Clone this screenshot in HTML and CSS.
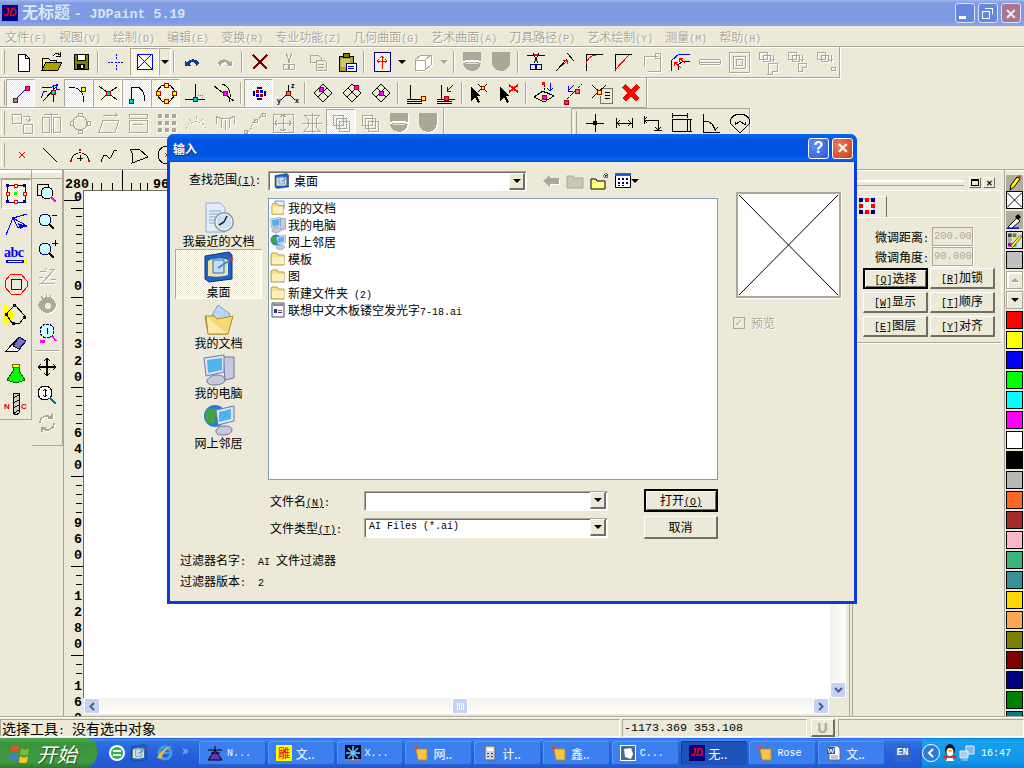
FILE: index.html
```html
<!DOCTYPE html>
<html lang="zh-CN">
<head>
    <meta charset="UTF-8">
    <link rel="stylesheet" href="styles.css">
    <title>JDPaint 5.19</title>
</head>
<body>

<!-- shared pictures, used big in the places bar and small in the list -->
<svg class="defs" width="0" height="0">
    <symbol id="desk" viewBox="0 0 32 32">
        <path d="M2 5l24-4 3 3v24L6 31l-4-3z" fill="#1d62c4" stroke="#0c3577"/>
        <path d="M5 10c6-3 14-3 20-1v15c-6 2-14 2-20 1z" fill="#f3e3a2"/>
        <path d="M10 9h11v13H10z" fill="#bfe0f7" stroke="#2a6cc0"/>
        <path d="M15 17l12-8" stroke="#4a86d0" stroke-width="2"/>
        <circle cx="28" cy="8" r="2" fill="#c8322a"/>
    </symbol>
    <symbol id="docs" viewBox="0 0 32 32">
        <path d="M15 1l12 9-6 10-12-9z" fill="#bcd6f5" stroke="#7e9ccc"/>
        <path d="M2 12h9l3 3 16-3-5 18H5z" fill="#f6d977" stroke="#b08d2c"/>
        <path d="M3 12l2 18 19 0" fill="#fbeaa8" stroke="#b08d2c"/>
    </symbol>
    <symbol id="comp" viewBox="0 0 32 32">
        <path d="M20 3h11v21l-9 2z" fill="#c6c9dc" stroke="#73769b"/>
        <path d="M1 4l20-3v17L3 22z" fill="#dfe4f2" stroke="#6e7aa5"/>
        <path d="M4 6l15-2v12L5 19z" fill="#4fb3ec"/>
        <path d="M4 27c0-3 5-6 10-6s8 2 8 5-5 5-10 5-8-1-8-4z" fill="#c6c9dc" stroke="#73769b"/>
    </symbol>
    <symbol id="net" viewBox="0 0 32 32">
        <circle cx="12" cy="12" r="11" fill="#2c7bd6"/>
        <path d="M5 5c4-2 8 0 9 3s-3 5-2 8-3 5-7 3c-4-4-4-10 0-14z" fill="#3fa441"/>
        <path d="M13 6l18-4v15l-16 4z" fill="#dfe4f2" stroke="#6e7aa5"/>
        <path d="M16 8l12-3v10l-12 3z" fill="#4fb3ec"/>
        <path d="M13 27c0-3 5-5 9-5s7 1 7 4-4 5-9 5-7-1-7-4z" fill="#c6c9dc" stroke="#73769b"/>
    </symbol>
    <symbol id="recent" viewBox="0 0 32 32">
        <path d="M3 1h14l5 5v24H3z" fill="#e4ecfa" stroke="#93a9d8"/>
        <path d="M6 9h12M6 12h10M6 15h8M6 18h8M6 21h8" stroke="#8aa5d8"/>
        <circle cx="21" cy="20" r="10" fill="#8f95a5"/>
        <circle cx="21" cy="20" r="8" fill="#c7e2f2" stroke="#fff"/>
        <path d="M21 20l-5 3M21 20l3-6" stroke="#222" stroke-width="1.5"/>
    </symbol>
    <symbol id="folder" viewBox="0 0 16 16">
        <path d="M1 4l1-2h5l1 2h6v10H1z" fill="#fbe08e" stroke="#b99a3c"/>
        <path d="M2 6h12v7H2z" fill="#fdf0bd"/>
    </symbol>
    <symbol id="shield" viewBox="0 0 24 24">
        <path d="M3 2h18v10c0 5-4 9-9 9s-9-4-9-9z" fill="#aca899"/>
    </symbol>
    <symbol id="shield-band" viewBox="0 0 24 24">
        <path d="M3 2h18v10c0 5-4 9-9 9s-9-4-9-9z" fill="#aca899"/>
        <path d="M3 11c4-2 14-2 18 0v2c-4-2-14-2-18 0z" fill="#fff"/>
        <path d="M6 14c3-1 9-1 12 0" stroke="#ece9d8"/>
    </symbol>
</svg>

<div class="desktop">

    <div class="titlebar">
        <span class="app-logo">JD</span>
        <span class="title-text">无标题 <span class="title-lat">- JDPaint 5.19</span></span>
        <div class="win-btns">
            <span class="win-btn"><i class="glyph-min"></i></span>
            <span class="win-btn"><svg width="12" height="12" viewBox="0 0 12 12"><path d="M3.500 1.500h7v6M.500 4.500h7v7h-7z" fill="none" stroke="#fff"/><path d="M3 1h8v1H3zM0 4h8v1H0z" fill="#fff"/></svg></span>
            <span class="win-btn win-close">✕</span>
        </div>
    </div>

    <div class="menubar">
        <span>文件<u class="m">(F)</u></span>
        <span>视图<u class="m">(V)</u></span>
        <span>绘制<u class="m">(D)</u></span>
        <span>编辑<u class="m">(E)</u></span>
        <span>变换<u class="m">(R)</u></span>
        <span>专业功能<u class="m">(Z)</u></span>
        <span>几何曲面<u class="m">(G)</u></span>
        <span>艺术曲面<u class="m">(A)</u></span>
        <span>刀具路径<u class="m">(P)</u></span>
        <span>艺术绘制<u class="m">(Y)</u></span>
        <span>测量<u class="m">(M)</u></span>
        <span>帮助<u class="m">(H)</u></span>
    </div>

    <!-- toolbar row 1 -->
    <div class="tbrow r1">
        <div class="toolbar tb1">
            <i class="grip"></i>
            <span class="tbtn"><svg class="i" viewBox="0 0 24 24"><path d="M7 4h7l4 4v13H7z" fill="#fff" stroke="#000"/><path d="M14 4v4h4" stroke="#000"/></svg></span>
            <span class="tbtn"><svg class="i" viewBox="0 0 24 24"><path d="M2 20V8h6l2 2h6v3" fill="#ffe98a" stroke="#000"/><path d="M2 20l4-8h16l-4 8z" fill="#a9a200" stroke="#000"/><path d="M13 6c2-3 5-3 7-1" stroke="#000"/><path d="M20 2v4h-4" stroke="#000"/></svg></span>
            <span class="tbtn"><svg class="i" viewBox="0 0 24 24"><path d="M5 4h14v15H5z" fill="#808000" stroke="#000"/><path d="M8 4h8v6H8z" fill="#fff" stroke="#000"/><path d="M8 14h8v5H8z" fill="#000"/><path d="M12 15h2v3h-2z" fill="#fff"/></svg></span>
            <i class="sep"></i>
            <span class="tbtn"><svg class="i" viewBox="0 0 24 24"><path d="M4 12h6M14 12h6M12 4v5M12 15v5" stroke="#00f" stroke-dasharray="2 1"/><path d="M11 12h2" stroke="#00f"/></svg></span>
            <span class="tbtn on"><svg class="i" viewBox="0 0 24 24"><path d="M4 4h15v15H4z" fill="#fff" stroke="#00f" stroke-width="1"/><path d="M4 4l15 15M19 4L4 19" stroke="#00f"/></svg></span>
            <span class="tbtn drop on-line"><i class="caret"></i></span>
            <i class="sep"></i>
            <span class="tbtn w31"><svg class="i" viewBox="0 0 24 24"><path d="M6 13c2-5 10-5 12 0-1 2-2 3-3 3 1-4-5-5-7-2l2 2H4v-6z" fill="#0a3a9b"/></svg></span>
            <span class="tbtn w31 off"><svg class="i" viewBox="0 0 24 24"><path d="M18 13c-2-5-10-5-12 0 1 2 2 3 3 3-1-4 5-5 7-2l-2 2h6v-6z" fill="#aca899"/></svg></span>
            <i class="sep"></i>
            <span class="tbtn"><svg class="i" viewBox="0 0 24 24"><path d="M5 5l14 14M19 5L5 19" stroke="#7f0000" stroke-width="2.500"/></svg></span>
            <span class="tbtn off"><svg class="i" viewBox="0 0 24 24"><path d="M9 3l4 10M15 3l-4 10" stroke="#aca899"/><circle cx="9" cy="17" r="3" stroke="#aca899"/><circle cx="15" cy="17" r="3" stroke="#aca899"/></svg></span>
            <span class="tbtn off"><svg class="i" viewBox="0 0 24 24"><path d="M4 5h8l3 3v4H4z" fill="#ece9d8" stroke="#aca899"/><path d="M10 10h8l2 2v8H10z" fill="#ece9d8" stroke="#aca899"/><path d="M12 14h6M12 17h6" stroke="#aca899"/></svg></span>
            <span class="tbtn"><svg class="i" viewBox="0 0 24 24"><path d="M4 6h14v15H4z" fill="#b0a040" stroke="#000"/><path d="M8 3h6v4H8z" fill="#808000" stroke="#000"/><path d="M6 9h9v8H6z" fill="#cfc86a"/><path d="M11 13h10v8H11z" fill="#fff" stroke="#00007f"/><path d="M13 16h6M13 18h6" stroke="#00f"/></svg></span>
            <i class="sep"></i>
            <span class="tbtn"><svg class="i" viewBox="0 0 24 24"><path d="M4 2h16v19H4z" stroke="#00007f" fill="#f4f2e8"/><path d="M12 6v10M7 11h10" stroke="#f00"/><path d="M10 8l2-2 2 2M9 9l-2 2 2 2M15 9l2 2-2 2M12 16v3" stroke="#f00"/></svg></span>
            <span class="tbtn drop"><i class="caret"></i></span>
            <span class="tbtn off"><svg class="i" viewBox="0 0 24 24"><path d="M4 10l6-5h10v10l-6 5H4z" fill="#fff" stroke="#aca899"/><path d="M4 10h10v10M14 10l6-5" stroke="#aca899"/></svg></span>
            <span class="tbtn drop w14 off"><i class="caret"></i></span>
            <i class="sep"></i>
            <span class="tbtn"><svg class="i" viewBox="0 0 24 24"><use href="#shield-band"/></svg></span>
            <span class="tbtn"><svg class="i" viewBox="0 0 24 24"><use href="#shield"/></svg></span>
            <i class="sep"></i>
            <span class="tbtn"><svg class="i" viewBox="0 0 24 24"><path d="M3 5h18" stroke="#00007f"/><path d="M9 3l5 10M15 3l-5 10" stroke="#000"/><circle cx="9" cy="17" r="3" stroke="#00007f"/><circle cx="15" cy="17" r="3" stroke="#00007f"/><path d="M10 5h4" stroke="#f00" stroke-width="2"/></svg></span>
            <span class="tbtn"><svg class="i" viewBox="0 0 24 24"><path d="M3 21L14 9M14 3l7 8" stroke="#000"/><path d="M9 16l5-5" stroke="#f00"/><path d="M10 10h4v4" stroke="#f00"/></svg></span>
            <span class="tbtn"><svg class="i" viewBox="0 0 24 24"><path d="M4 21V4h17" stroke="#000"/><path d="M4 14c1-5 5-9 10-9" stroke="#f00"/></svg></span>
            <span class="tbtn"><svg class="i" viewBox="0 0 24 24"><path d="M4 21V4h17" stroke="#000"/><path d="M4 20L18 5" stroke="#f00"/></svg></span>
            <span class="tbtn off"><svg class="i" viewBox="0 0 24 24"><path d="M4 6h14M20 9v12H8M4 6v11" stroke="#aca899"/><path d="M15 3h5v5h-5z" stroke="#aca899"/></svg></span>
            <span class="tbtn"><svg class="i" viewBox="0 0 24 24"><path d="M2 21V11l8-7h11" stroke="#00f"/><path d="M9 20V15l5-4h7" stroke="#000"/><path d="M5 12l7 6M5 12h4M5 12v4M10 8l6 5M10 8h4M10 8v4" stroke="#f00"/></svg></span>
            <span class="tbtn off"><svg class="i" viewBox="0 0 24 24"><path d="M1 12c0-3 4-3 11-3s11 0 11 3-4 3-11 3-11 0-11-3z" stroke="#aca899"/><path d="M2 12h20" stroke="#aca899"/></svg></span>
            <span class="tbtn off"><svg class="i" viewBox="0 0 24 24"><path d="M2 2h20v20H2zM6 6h12v12H6zM9 9h6v6H9z" stroke="#aca899"/></svg></span>
            <span class="tbtn off"><svg class="i" viewBox="0 0 24 24"><path d="M3 2h8v7H3zM7 5h7v6H7zM17 5v6l-2-2M17 11l2-2M13 13h8v8h-5v3h-4z" stroke="#aca899"/></svg></span>
            <span class="tbtn off"><svg class="i" viewBox="0 0 24 24"><path d="M3 2h8v7H3zM7 5h7v6H7zM17 5v6l-2-2M17 11l2-2M13 13h8v4h-4v4h-4z" stroke="#aca899"/></svg></span>
            <span class="tbtn off"><svg class="i" viewBox="0 0 24 24"><path d="M3 2h8v7H3zM7 5h7v6H7zM17 5v6l-2-2M17 11l2-2M17 17h4v3h-4z" stroke="#aca899"/></svg></span>
        </div>
    </div>

    <!-- toolbar row 2 -->
    <div class="tbrow">
        <div class="toolbar tb2">
            <i class="grip g2"></i>
            <span class="tbtn on"><svg class="i" viewBox="0 0 24 24"><path d="M6 19L18 7" stroke="#00007f"/><path d="M4 17h4v4H4z" fill="#0cc" stroke="#a00"/><path d="M16 5h4v4h-4z" fill="#f0f" stroke="#a00"/></svg></span>
            <span class="tbtn"><svg class="i" viewBox="0 0 24 24"><path d="M4 6h10M15 4v17M5 20L20 4" stroke="#000"/><path d="M3 17l3-7h3M14 6l6-3M18 8h4M18 8V4" stroke="#00f"/><path d="M13 9h4v4h-4z" fill="#0cc" stroke="#a00"/></svg></span>
            <span class="tbtn on"><svg class="i" viewBox="0 0 24 24"><path d="M2 6c8 0 15 4 15 15" stroke="#000"/><path d="M14 6h4v4h-4z" fill="#ff0" stroke="#a00"/></svg></span>
            <span class="tbtn on"><svg class="i" viewBox="0 0 24 24"><path d="M3 5l9 7-7 7M21 6l-9 6 9 7" stroke="#000"/><path d="M10 10h4v4h-4z" fill="#0cc" stroke="#a00"/></svg></span>
            <span class="tbtn on"><svg class="i" viewBox="0 0 24 24"><path d="M6 20V6h6c5 1 8 7 8 14" stroke="#000" stroke-dasharray="8 0"/><path d="M4 18h4v4H4z" fill="#0cc" stroke="#a00"/></svg></span>
            <span class="tbtn on"><svg class="i" viewBox="0 0 24 24"><path d="M8 4h8l5 6v4l-5 6H8l-5-6v-4z" stroke="#000"/><path d="M10 2h4v4h-4zM10 18h4v4h-4zM2 10h4v4H2zM18 10h4v4h-4z" fill="#ff0" stroke="#a00"/></svg></span>
            <span class="tbtn"><svg class="i" viewBox="0 0 24 24"><path d="M12 3v15M2 18h20" stroke="#000"/><path d="M15 14h4M19 14v3" stroke="#777" stroke-dasharray="1 1"/><path d="M10 16h4v4h-4z" fill="#0cc" stroke="#a00"/></svg></span>
            <span class="tbtn"><svg class="i" viewBox="0 0 24 24"><path d="M2 5l20 15M10 3c7 2 10 9 7 18" stroke="#000"/><path d="M11 10h4v4h-4z" fill="#f0f" stroke="#a00"/></svg></span>
            <i class="sep"></i>
            <span class="tbtn on"><svg class="i" viewBox="0 0 24 24"><path d="M8 8h9v9H8z" fill="#fff"/><path d="M10 7h5M10 18h5M7 10v5M18 10v5" stroke="#00007f" stroke-width="2"/><path d="M9 9h3v3H9z" fill="#a00"/><path d="M13 13h3v3h-3z" fill="#a00"/><path d="M13 9h3v3h-3zM9 13h3v3H9z" fill="#00f"/></svg></span>
            <span class="tbtn"><svg class="i" viewBox="0 0 24 24"><path d="M12 12V4M12 12l-7 7M12 12l7 7" stroke="#000"/><text class="axis" x="15" y="7">z</text><text class="axis" x="1" y="22">y</text><text class="axis" x="19" y="22">x</text><path d="M10 10h4v4h-4z" fill="#f66" stroke="#800"/></svg></span>
            <i class="sep"></i>
            <span class="tbtn"><svg class="i" viewBox="0 0 24 24"><path d="M12 3l9 9-9 9-9-9zM8 7l9 9M16 7l-9 9" stroke="#000"/><path d="M8 6h4v4H8z" fill="#f0f" stroke="#a00"/></svg></span>
            <span class="tbtn"><svg class="i" viewBox="0 0 24 24"><path d="M12 3l9 9-9 9-9-9zM8 7l9 9M16 7l-9 9" stroke="#000"/><path d="M14 4h4v4h-4z" fill="#f0f" stroke="#a00"/></svg></span>
            <span class="tbtn"><svg class="i" viewBox="0 0 24 24"><path d="M12 3l9 9-9 9-9-9zM8 7l9 9M16 7l-9 9" stroke="#000"/><path d="M10 10h4v4h-4z" fill="#f0f" stroke="#a00"/></svg></span>
            <i class="sep"></i>
            <span class="tbtn"><svg class="i" viewBox="0 0 24 24"><path d="M6 4v14h14M3 18h17M3 20h15M3 22h15" stroke="#000"/><path d="M17 15h4v4h-4z" fill="#ff0" stroke="#a00"/></svg></span>
            <span class="tbtn"><svg class="i" viewBox="0 0 24 24"><path d="M8 4v14h14M4 18h17M4 20h15M4 22h15" stroke="#000"/><path d="M14 10l6-6M14 6v4h4" stroke="#00f"/><path d="M11 15h4v4h-4z" fill="#f0f" stroke="#a00"/></svg></span>
            <i class="sep"></i>
            <span class="tbtn"><svg class="i" viewBox="0 0 24 24"><path d="M3 6l10 9-4 0 3 6-2 1-3-6-4 4z" fill="#000"/><path d="M10 3l9 8M19 3l-9 8" stroke="#000"/><path d="M13 5h3v3h-3z" fill="#ff0" stroke="#a00"/></svg></span>
            <span class="tbtn"><svg class="i" viewBox="0 0 24 24"><path d="M3 6l10 9-4 0 3 6-2 1-3-6-4 4z" fill="#000"/><path d="M12 4l9 7M21 4l-9 7" stroke="#f00" stroke-width="2"/></svg></span>
            <i class="sep"></i>
            <span class="tbtn"><svg class="i" viewBox="0 0 24 24"><path d="M2 16l9-6 11 5-10 6z" stroke="#000"/><path d="M12 4v8" stroke="#000" stroke-dasharray="2 1"/><path d="M18 2v8M15 7l3 3 3-3" stroke="#00f"/><path d="M10 1h3v3h-3z" fill="#f00"/><path d="M10 14h4v4h-4z" fill="#f0f" stroke="#a00"/></svg></span>
            <span class="tbtn"><svg class="i" viewBox="0 0 24 24"><path d="M3 21L21 3" stroke="#000" stroke-dasharray="3 1"/><path d="M13 4l-6 6M7 5v5h5" stroke="#00f"/><path d="M3 19h4v4H3z" fill="#f0f" stroke="#a00"/><path d="M14 8h4v4h-4z" fill="#f66" stroke="#a00"/></svg></span>
            <span class="tbtn"><svg class="i" viewBox="0 0 24 24"><path d="M2 4l14 13M16 4L2 17" stroke="#000"/><path d="M13 7h9v15H10v-7" fill="#ece9d8" stroke="#777"/><path d="M15 11h5M15 14h5M15 17h5" stroke="#000"/><path d="M7 9h4v4H7z" fill="#ff0" stroke="#a00"/></svg></span>
            <span class="tbtn"><svg class="i" viewBox="0 0 24 24"><path d="M5 5l14 14M19 5L5 19" stroke="#f00" stroke-width="5"/></svg></span>
        </div>
    </div>

    <!-- toolbar row 3 -->
    <div class="tbrow">
        <div class="toolbar tb3">
            <i class="grip g3"></i>
            <span class="tbtn off"><svg class="i" viewBox="0 0 24 24"><path d="M2 3h9v9H2zM13 13h9v9h-9zM13 5h6v5M16 8l3 3 2-3" stroke="#aca899"/></svg></span>
            <span class="tbtn off"><svg class="i" viewBox="0 0 24 24"><path d="M3 6h7v15H3zM14 6h7v15h-7zM12 2v21M5 3h14" stroke="#aca899"/></svg></span>
            <span class="tbtn off"><svg class="i" viewBox="0 0 24 24"><circle cx="12" cy="12" r="7" stroke="#aca899"/><path d="M10 2h4v3h-4zM10 19h4v3h-4zM2 10h3v4H2zM19 10h3v4h-3z" stroke="#aca899"/></svg></span>
            <span class="tbtn off"><svg class="i" viewBox="0 0 24 24"><path d="M6 9h16l-4 12H2zM6 4h14l-2-2M20 4l-2 2" stroke="#aca899"/></svg></span>
            <span class="tbtn off"><svg class="i" viewBox="0 0 24 24"><path d="M3 3h18v4H3zM3 9h18v12H3zM7 13h10" stroke="#aca899"/></svg></span>
            <span class="tbtn off"><svg class="i" viewBox="0 0 24 24"><path d="M3 3h4v4H3zM10 3h4v4h-4zM17 3h4v4h-4zM3 10h4v4H3zM10 10h4v4h-4zM17 10h4v4h-4zM3 17h4v4H3zM10 17h4v4h-4zM17 17h4v4h-4z" fill="#aca899"/></svg></span>
            <span class="tbtn off"><svg class="i" viewBox="0 0 24 24"><path d="M2 18C5 8 19 8 22 18" stroke="#aca899" stroke-dasharray="2 2"/><path d="M5 8l2 2M12 5v3M19 8l-2 2" stroke="#aca899"/></svg></span>
            <span class="tbtn off"><svg class="i" viewBox="0 0 24 24"><path d="M3 5c5 4 13 4 18 0M3 5v8M8 8v9M12 9v10M16 8v9M21 5v8" stroke="#aca899"/></svg></span>
            <span class="tbtn off"><svg class="i" viewBox="0 0 24 24"><path d="M4 21c8 0 4-11 10-12s3-5 7-6" stroke="#aca899" stroke-dasharray="3 1"/><path d="M2 19h3v3H2zM12 8h3v3h-3zM20 2h3v3h-3z" stroke="#aca899"/></svg></span>
            <span class="tbtn off"><svg class="i" viewBox="0 0 24 24"><path d="M2 3h20v18H2zM12 4v16M3 12h18M9 6l3-2 3 2M9 18l3 2 3-2M6 9l-2 3 2 3M18 9l2 3-2 3" stroke="#aca899"/></svg></span>
            <span class="tbtn off"><svg class="i" viewBox="0 0 24 24"><path d="M4 4h16l-4 4v8l4 4H4l4-4V8zM2 12h20M12 2v20" stroke="#aca899"/></svg></span>
            <span class="tbtn on off"><svg class="i" viewBox="0 0 24 24"><path d="M4 4h10v10H4zM10 10h10v10H10zM7 7h10v10H7z" stroke="#aca899"/></svg></span>
            <span class="tbtn off"><svg class="i" viewBox="0 0 24 24"><path d="M4 4h10v10H4zM10 10h10v10H10zM7 7h10v10H7z" stroke="#aca899"/></svg></span>
            <span class="tbtn off"><svg class="i" viewBox="0 0 24 24"><use href="#shield-band"/></svg></span>
            <span class="tbtn off"><svg class="i" viewBox="0 0 24 24"><use href="#shield"/></svg></span>
        </div>
        <div class="toolbar tb3b">
            <i class="grip"></i>
            <span class="tbtn"><svg class="i" viewBox="0 0 24 24"><path d="M12 3v18M3 12h18" stroke="#000"/><path d="M10 10h4v4h-4z" fill="#000"/></svg></span>
            <span class="tbtn"><svg class="i" viewBox="0 0 24 24"><path d="M4 7v10M20 7v10M4 12h16M5 12l3-3M5 12l3 3M19 12l-3-3M19 12l-3 3" stroke="#000"/></svg></span>
            <span class="tbtn"><svg class="i" viewBox="0 0 24 24"><path d="M3 5v8M3 9h14v10M3 9l3-3M3 9l3 3M13 19h8M17 19l-3-3M17 19l3-3" stroke="#000"/></svg></span>
            <span class="tbtn"><svg class="i" viewBox="0 0 24 24"><path d="M2 8h15v12H2zM2 2v5M17 2v5M2 4h15M20 8v12M22 8h-4M22 20h-4" stroke="#000"/></svg></span>
            <span class="tbtn"><svg class="i" viewBox="0 0 24 24"><path d="M4 3v18h17" stroke="#000"/><path d="M5 10c6 0 10 4 12 10M14 14l2 5 3-3" stroke="#000"/></svg></span>
            <span class="tbtn"><svg class="i" viewBox="0 0 24 24"><path d="M2 12c0-6 5-9 10-9s10 3 10 9l-10 10z" stroke="#000"/><path d="M7 14l5-4 5 4M7 14v-3M17 14v-3" stroke="#000"/></svg></span>
        </div>
    </div>

    <!-- toolbar row 4 -->
    <div class="tbrow r4">
        <div class="toolbar tb4">
            <i class="grip g3"></i>
            <span class="tbtn"><svg class="i" viewBox="0 0 24 24"><path d="M9 9l6 6M15 9l-6 6" stroke="#f00"/></svg></span>
            <span class="tbtn"><svg class="i" viewBox="0 0 24 24"><path d="M4 5l14 14" stroke="#000"/></svg></span>
            <span class="tbtn"><svg class="i" viewBox="0 0 24 24"><path d="M3 18C5 7 19 7 21 18M12 12v6M9 15h6" stroke="#000"/><path d="M11 6l2 2M13 6l-2 2M2 17l2 2M4 17l-2 2M20 17l2 2M22 17l-2 2" stroke="#c00"/></svg></span>
            <span class="tbtn"><svg class="i" viewBox="0 0 24 24"><path d="M4 19c2-7 4-8 6-6s3 4 5-1 3-5 5-5" stroke="#000"/></svg></span>
            <span class="tbtn"><svg class="i" viewBox="0 0 24 24"><path d="M4 6h9l9 8-16 6 1-8z" stroke="#000"/></svg></span>
            <span class="tbtn"><svg class="i" viewBox="0 0 24 24"><circle cx="12" cy="12" r="9" stroke="#000"/><path d="M10 10l4 4M14 10l-4 4" stroke="#f00"/></svg></span>
        </div>
    </div>

    <div class="workarea">
        <!-- left tool column -->
        <div class="toolcol">
            <i class="hgrip"></i>
            <span class="cbtn on"><svg class="i" viewBox="0 0 24 24"><path d="M3 3h18v17H3z" stroke="#00007f"/><path d="M2 2h3v3H2zM19 2h3v3h-3zM2 18h3v3H2zM19 18h3v3h-3z" fill="#00007f"/><path d="M10 2h3v3h-3zM10 18h3v3h-3zM2 10h3v3H2zM19 10h3v3h-3z" fill="#fff" stroke="#f00"/><path d="M10 10h3v3h-3z" fill="#0f0"/></svg></span>
            <span class="cbtn"><svg class="i" viewBox="0 0 24 24"><path d="M2 23L9 6l14-4M9 6l14 8-9 2z" stroke="#00f"/><path d="M8 5h3v3H8z" fill="#00f"/><path d="M14 11l8 3-6 3z" fill="#00f"/></svg></span>
            <span class="cbtn"><svg class="i abc" viewBox="0 0 24 24"><text class="abc-text" x="0" y="15">abc</text><path d="M2 18h20v3H2z" fill="#00f"/><path d="M4 19h14" stroke="#fff"/><path d="M20 18h3v3h-3z" fill="#ff0"/></svg></span>
            <span class="cbtn"><svg class="i" viewBox="0 0 24 24"><path d="M7 2h10l6 7v6l-6 7H7l-6-7V9z" stroke="#f00"/><path d="M7 7h10v10H7z" stroke="#00f"/></svg></span>
            <span class="cbtn"><svg class="i" viewBox="0 0 24 24"><path d="M0 2l11 11-5 8H0z" fill="#ff0" stroke="none"/><path d="M2 12l9-9 10 11-5 7H8z" stroke="#000"/><path d="M9 2h3v3H9zM1 11h3v3H1zM19 14h3v3h-3zM8 20h3v3H8z" fill="#000"/></svg></span>
            <span class="cbtn"><svg class="i" viewBox="0 0 24 24"><path d="M2 19l13-14 7 4-8 10z" fill="#fff" stroke="#000"/><path d="M9 14l6-9 7 4-7 8z" fill="#77a" stroke="#00007f"/></svg></span>
            <span class="cbtn"><svg class="i" viewBox="0 0 24 24"><path d="M9 3h6v6l6 9-9 3-9-3 6-9z" fill="#0f0" stroke="#060"/><ellipse cx="12" cy="4" rx="4" ry="2" fill="#ff0" stroke="#660"/></svg></span>
            <span class="cbtn"><svg class="i" viewBox="0 0 24 24"><path d="M9 1h6v20l-3 2-3-2z" fill="#ccc" stroke="#000"/><path d="M9 6l6-3M9 11l6-3M9 16l6-3M10 21l5-3" stroke="#000"/><text class="nc" x="0" y="17" fill="#c00">N</text><text class="nc" x="17" y="17" fill="#c00">C</text></svg></span>
        </div>

        <div class="toolcol tc2">
            <i class="hgrip"></i>
            <span class="zbtn"><svg class="i" viewBox="0 0 24 24"><path d="M2 3h11v11H2z" stroke="#000"/><circle cx="12" cy="12" r="6" fill="#cff" stroke="#000"/><path d="M16 16l5 5" stroke="#f0f" stroke-width="2"/></svg></span>
            <span class="zbtn"><svg class="i" viewBox="0 0 24 24"><circle cx="10" cy="11" r="6" fill="#cff" stroke="#006"/><path d="M14 15l5 5" stroke="#000" stroke-width="2"/><path d="M17 6h5" stroke="#000"/></svg></span>
            <span class="zbtn"><svg class="i" viewBox="0 0 24 24"><circle cx="10" cy="12" r="6" fill="#cff" stroke="#006"/><path d="M14 16l5 5" stroke="#000" stroke-width="2"/><path d="M17 6h6M20 3v6" stroke="#000"/></svg></span>
            <span class="zbtn off"><svg class="i" viewBox="0 0 24 24"><path d="M5 6h6M15 4h5l-13 14h13M4 12h4M16 14h5M6 18l-2 2M12 3l-2 2" stroke="#aca899"/></svg></span>
            <span class="zbtn off"><svg class="i" viewBox="0 0 24 24"><path d="M3 12c2-6 6-8 10-8s8 4 8 8-4 8-9 8-7-4-9-8z" fill="#aca899"/><path d="M6 3l2 3M11 1v3M16 2l-1 3" stroke="#aca899"/><circle cx="13" cy="13" r="3" fill="#ece9d8"/></svg></span>
            <span class="zbtn"><svg class="i" viewBox="0 0 24 24"><circle cx="12" cy="10" r="7" fill="#cff" stroke="#006" stroke-dasharray="3 1"/><path d="M12 7v6" stroke="#000"/><path d="M17 15l4 5" stroke="#f0f" stroke-width="2"/><path d="M5 19h5v3H5z" fill="#f0f"/></svg></span>
            <i class="hline"></i>
            <span class="zbtn"><svg class="i" viewBox="0 0 24 24"><path d="M12 3v18M3 12h18M9 6l3-3 3 3M9 18l3 3 3-3M6 9l-3 3 3 3M18 9l3 3-3 3" stroke="#000" stroke-width="1.400"/></svg></span>
            <span class="zbtn"><svg class="i" viewBox="0 0 24 24"><circle cx="10" cy="10" r="7" fill="#fff" stroke="#000"/><path d="M10 6v8M8 8l2-2 2 2M8 12l2 2 2-2" stroke="#000"/><path d="M15 15l6 6" stroke="#07a" stroke-width="2"/></svg></span>
            <span class="zbtn off"><svg class="i" viewBox="0 0 24 24"><path d="M5 12a7 7 0 0 1 12-5M19 12a7 7 0 0 1-12 5M17 3v4h-4M7 21v-4h4" stroke="#aca899" stroke-width="1.500"/></svg></span>
        </div>

        <!-- ruler and drawing area -->
        <div class="canvas-wrap">
            <svg class="hruler" width="782" height="20">
                <text class="rtxt" x="1" y="18">280</text>
                <path d="M28.500 13v7M37.500 13v7M48.500 13v7M58.500 0v20M67.500 13v7M76.500 13v7M83.500 13v7" stroke="#000"/>
                <text class="rtxt" x="89" y="18">96</text>
            </svg>
            <div class="canvas-mid">
                <svg class="vruler" width="19" height="526">
                    <path d="M0 10.500h15" stroke="#000"/>
                    <path d="M7 18.500h12M12 26.500h6M12 35.500h6M12 44.500h6M12 53.500h6M12 62.500h6M12 71.500h6M12 80.500h6M7 107.500h12M12 115.500h6M12 124.500h6M12 133.500h6M12 142.500h6M7 197.500h12M12 206.500h6M12 215.500h6M12 224.500h6M12 233.500h6M7 286.500h12M12 295.500h6M12 304.500h6M12 313.500h6M12 322.500h6M7 376.500h12M12 385.500h6M12 394.500h6M7 465.500h12M12 474.500h6M12 483.500h6" stroke="#000"/>
                    <text class="rtxt" x="10" y="11">0</text>
                    <text class="rtxt" x="10" y="100">0</text>
                    <text class="rtxt" x="10" y="158">3</text><text class="rtxt" x="10" y="175">2</text><text class="rtxt" x="10" y="191">0</text>
                    <text class="rtxt" x="10" y="247">6</text><text class="rtxt" x="10" y="263">4</text><text class="rtxt" x="10" y="279">0</text>
                    <text class="rtxt" x="10" y="337">9</text><text class="rtxt" x="10" y="353">6</text><text class="rtxt" x="10" y="369">0</text>
                    <text class="rtxt" x="10" y="410">1</text><text class="rtxt" x="10" y="426">2</text><text class="rtxt" x="10" y="442">8</text><text class="rtxt" x="10" y="458">0</text>
                    <text class="rtxt" x="10" y="500">1</text><text class="rtxt" x="10" y="516">6</text><text class="rtxt" x="10" y="532">0</text>
                </svg>
                <div class="canvas-col">
                    <div class="canvas-row">
                        <div class="canvas"></div>
                        <div class="vscroll">
                            <span class="sb-btn"><svg width="9" height="6" viewBox="0 0 9 6"><path d="M1 5l3.500-3.500L8 5" class="sb-arrow"/></svg></span>
                            <span class="sb-fill"></span>
                            <span class="sb-btn"><svg width="9" height="6" viewBox="0 0 9 6"><path d="M1 1l3.500 3.500L8 1" class="sb-arrow"/></svg></span>
                        </div>
                    </div>
                    <div class="hscroll">
                        <span class="sb-btn"><svg width="6" height="9" viewBox="0 0 6 9"><path d="M5 1L1.500 4.500 5 8" class="sb-arrow"/></svg></span>
                        <span class="sb-fill"></span>
                        <span class="sb-btn sb-thumb"><svg width="7" height="7" viewBox="0 0 7 7"><path d="M.5 0v7M2.500 0v7M4.500 0v7M6.500 0v7" stroke="#fff"/></svg></span>
                        <span class="sb-fill"></span>
                        <span class="sb-btn"><svg width="6" height="9" viewBox="0 0 6 9"><path d="M1 1l3.500 3.500L1 8" class="sb-arrow"/></svg></span>
                    </div>
                </div>
            </div>
        </div>

        <!-- right side panel -->
        <div class="panel">
            <div class="panel-head">
                <i class="panel-grip"></i>
                <span class="mini-btn"><i class="mini-max"></i></span>
                <span class="mini-btn mini-x">✕</span>
            </div>
            <div class="panel-body">
                <div class="tabs">
                    <span class="tab"><svg width="16" height="16" viewBox="0 0 16 16"><path d="M0 0h16v16H0z" fill="#bdbdbd"/><path d="M2 2h12v12H2z" fill="#f0f0f0"/><path d="M0 0h4v4H0zM12 0h4v4h-4zM0 12h4v4H0zM12 12h4v4h-4z" fill="#00007f"/><path d="M6 0h4v4H6zM6 12h4v4H6zM0 6h4v4H0zM12 6h4v4h-4z" fill="#f00"/></svg></span>
                </div>
                <div class="nudge-row"><label>微调距离<span class="m">:</span></label><span class="nudge-input">200.00</span></div>
                <div class="nudge-row"><label>微调角度<span class="m">:</span></label><span class="nudge-input">90.000</span></div>
                <div class="panel-btns">
                    <button class="pbtn default"><span class="m">[<u>Q</u>]</span>选择</button>
                    <button class="pbtn"><span class="m">[<u>R</u>]</span>加锁</button>
                    <button class="pbtn"><span class="m">[<u>W</u>]</span>显示</button>
                    <button class="pbtn"><span class="m">[<u>T</u>]</span>顺序</button>
                    <button class="pbtn"><span class="m">[<u>E</u>]</span>图层</button>
                    <button class="pbtn"><span class="m">[<u>Y</u>]</span>对齐</button>
                </div>
            </div>
        </div>

        <!-- colour column -->
        <div class="palette">
            <span class="pal-tool pal-top"><svg width="16" height="16" viewBox="0 0 16 16"><path d="M3 15l1-5 6-8 3 2-6 8z" fill="#ff0" stroke="#000"/><path d="M10 2l3 2 1-2-2-2z" fill="#a33"/></svg></span>
            <span class="swatch sw-white"><svg width="15" height="16" viewBox="0 0 16 16"><path d="M0 0l16 16M16 0L0 16" stroke="#000"/></svg></span>
            <span class="swatch sw-tool"><svg width="17" height="17" viewBox="0 0 17 17"><path d="M2 15l9-9 3 3-9 8z" fill="#fff" stroke="#000"/><path d="M9 5l3-3 3 3-3 3z" fill="#000"/><path d="M1 17l12-1H1z" fill="#00f" stroke="#00f"/></svg></span>
            <span class="swatch sw-grid"><svg width="15" height="16" viewBox="0 0 16 16"><path d="M0 0h16v16H0z" fill="#ddd"/><path d="M1 1h4v4H1z" fill="#444"/><path d="M6 1h4v4H6z" fill="#808000"/><path d="M1 6h4v4H1z" fill="#aaa"/><path d="M1 11h4v4H1z" fill="#a0a"/><path d="M6 11h4v4H6z" fill="#0aa"/><path d="M4 14L14 3l2 1L6 16z" fill="#ff0" stroke="#000" stroke-width=".6"/></svg></span>
            <span class="swatch" style="background:#c0c0c0"></span>
            <span class="pal-tool pal-up off"><i class="caret up"></i></span>
            <span class="pal-tool pal-dn"><i class="caret"></i></span>
            <span class="swatch" style="background:#ff0000"></span>
            <span class="swatch" style="background:#ffff00"></span>
            <span class="swatch" style="background:#0000ff"></span>
            <span class="swatch" style="background:#00ff00"></span>
            <span class="swatch" style="background:#00ffff"></span>
            <span class="swatch" style="background:#ff00ff"></span>
            <span class="swatch" style="background:#ffffff"></span>
            <span class="swatch" style="background:#000000"></span>
            <span class="swatch" style="background:#b8b8b8"></span>
            <span class="swatch" style="background:#ff6622"></span>
            <span class="swatch" style="background:#a52a2a"></span>
            <span class="swatch" style="background:#ffb6c8"></span>
            <span class="swatch" style="background:#3cb37a"></span>
            <span class="swatch" style="background:#3a9098"></span>
            <span class="swatch" style="background:#ffd700"></span>
            <span class="swatch" style="background:#ffa850"></span>
            <span class="swatch" style="background:#808000"></span>
            <span class="swatch" style="background:#800000"></span>
            <span class="swatch" style="background:#000080"></span>
            <span class="swatch" style="background:#008000"></span>
            <span class="swatch" style="background:#008080"></span>
        </div>
    </div>

    <div class="statusbar">
        <span class="pane pane-main">选择工具<span class="m14">: </span>没有选中对象</span>
        <span class="pane pane-coord">-1173.369 353.108</span>
        <span class="u-btn">U</span>
        <span class="pane pane-last"></span>
    </div>

    <div class="taskbar">
        <div class="start">
            <svg width="20" height="20" viewBox="0 0 20 20"><path d="M1 4c3-2 5-2 8 0l-1 6c-3-2-5-2-8 0z" fill="#e8502c"/><path d="M11 5c3 2 5 2 8 0l-1 6c-3 2-5 2-8 0z" fill="#7cbc3c"/><path d="M0 12c3-2 5-2 8 0l-1 6c-3-2-5-2-8 0z" fill="#3f7fd8"/><path d="M10 13c3 2 5 2 8 0l-1 6c-3 2-5 2-8 0z" fill="#f6c62c"/></svg>
            <span>开始</span>
        </div>
        <div class="quick">
            <svg width="18" height="18" viewBox="0 0 18 18"><circle cx="9" cy="9" r="8" fill="#fff"/><circle cx="9" cy="9" r="6" fill="#2fb34a"/><path d="M5 7h8M5 11h8" stroke="#fff" stroke-width="2"/></svg>
            <svg width="18" height="18"><use href="#desk"/></svg>
            <svg width="18" height="18" viewBox="0 0 18 18"><circle cx="9" cy="9" r="6" fill="none" stroke="#3aa0e8" stroke-width="3"/><path d="M4 9h10" stroke="#3aa0e8" stroke-width="2"/><path d="M1 14C4 7 11 2 17 2c-3 0-9 5-12 13z" fill="#f2b430"/></svg>
            <span class="chev">»</span>
        </div>
        <div class="tasks">
            <span class="task"><svg width="16" height="16" viewBox="0 0 16 16"><path d="M8 1v4M1 5h14M4 8h9M1 15L8 5l7 10z" fill="#6a2fc0" stroke="#000"/></svg><span class="m">N...</span></span>
            <span class="task"><svg width="16" height="16" viewBox="0 0 16 16"><path d="M0 0h16v16H0z" fill="#ff0"/><text class="task-glyph" x="2" y="13">雕</text></svg>文..</span>
            <span class="task"><svg width="16" height="16" viewBox="0 0 16 16"><path d="M0 0h16v16H0z" fill="#003"/><path d="M8 1v14M1 8h14M3 3l10 10M13 3L3 13" stroke="#6cf" stroke-width="1.500"/><path d="M0 15h16" stroke="#fff"/></svg><span class="m">X...</span></span>
            <span class="task"><svg width="16" height="16" viewBox="0 0 16 16"><path d="M3 4h11v11H5z" fill="#f8c548" stroke="#c08a20"/><circle cx="3" cy="2" r="2" fill="#d8483a"/></svg>网..</span>
            <span class="task"><svg width="16" height="16" viewBox="0 0 16 16"><path d="M3 1h10v14H3z" fill="#c8d4e8" stroke="#667"/><path d="M5 3h6v3H5z" fill="#fff"/><path d="M5 8h2v1H5zM9 8h2v1H9zM5 11h2v1H5zM9 11h2v1H9z" fill="#445"/></svg>计..</span>
            <span class="task"><svg width="16" height="16" viewBox="0 0 16 16"><path d="M3 4h11v11H5z" fill="#f8c548" stroke="#c08a20"/><circle cx="3" cy="2" r="2" fill="#d8483a"/></svg>鑫..</span>
            <span class="task"><svg width="16" height="16" viewBox="0 0 16 16"><path d="M0 0h16v16H0z" fill="#fff"/><path d="M1 1h14v14H1z" fill="#4a6a90"/><path d="M4 4l7-1 2 6-2 5-6-2z" fill="#fff"/></svg><span class="m">C...</span></span>
            <span class="task active"><span class="app-logo small">JD</span>无..</span>
            <span class="task"><svg width="16" height="16" viewBox="0 0 16 16"><path d="M3 4h11v11H5z" fill="#f8c548" stroke="#c08a20"/><circle cx="3" cy="2" r="2" fill="#d8483a"/></svg><span class="m">Rose</span></span>
            <span class="task"><svg width="16" height="16" viewBox="0 0 16 16"><path d="M3 1h9l2 3v11H3z" fill="#fff" stroke="#667"/><path d="M1 2h8v7H1z" fill="#2a56b8"/><path d="M2 3l1.500 5L5 4l1.500 4L8 3" stroke="#fff" fill="none"/><path d="M5 11h7M5 13h7" stroke="#88a"/></svg>文..</span>
        </div>
        <span class="lang">EN</span>
        <div class="tray">
            <span class="tray-arrow"><svg width="18" height="18" viewBox="0 0 18 18"><circle cx="9" cy="9" r="8.500" fill="#2c78e0" stroke="#fff"/><path d="M11 5L7 9l4 4" stroke="#fff" stroke-width="2" fill="none"/></svg></span>
            <svg width="16" height="18" viewBox="0 0 16 18"><ellipse cx="8" cy="6" rx="5" ry="6" fill="#111"/><ellipse cx="8" cy="8" rx="3.500" ry="4" fill="#fff"/><path d="M2 11c4 2 8 2 12 0l1 3-3 1H4l-3-1z" fill="#e02a20"/><path d="M5 14h6l1 3H4z" fill="#fff"/><path d="M6 6h4v2H6z" fill="#f6c62c"/></svg>
            <svg width="16" height="16" viewBox="0 0 16 16"><path d="M7 1h8v8H7z" fill="#8ab4e8" stroke="#e8eef8"/><path d="M1 6h8v7H1z" fill="#a8cdf2" stroke="#e8eef8"/><path d="M3 15h6" stroke="#ccd"/></svg>
            <span class="clock">16:47</span>
        </div>
    </div>

    <!-- open file dialog -->
    <div class="dialog">
        <div class="dlg-title">
            <span class="dlg-caption">输入</span>
            <span class="dlg-help">?</span>
            <span class="dlg-close">✕</span>
        </div>
        <div class="dlg-body">
            <div class="lookin">
                <label class="lookin-label">查找范围<u class="m">(I)</u><span class="m">:</span></label>
                <div class="combo combo-look">
                    <svg width="16" height="16"><use href="#desk"/></svg>
                    <span class="combo-text">桌面</span>
                    <span class="combo-btn"><i class="caret"></i></span>
                </div>
                <div class="lookin-tools">
                    <svg class="lk-back" width="18" height="14" viewBox="0 0 18 14"><path d="M1 7l7-6v3h9v6H8v3z" fill="#aca899"/></svg>
                    <svg class="lk-up" width="18" height="16" viewBox="0 0 18 16"><path d="M1 3h6l1 2h9v10H1z" fill="#c9c6b6" stroke="#aca899"/></svg>
                    <svg class="lk-new" width="20" height="18" viewBox="0 0 20 18"><path d="M1 7h5l1 2h8v8H1z" fill="#ffff80" stroke="#000"/><path d="M16 1v6M13 4h6M14 2l4 4M18 2l-4 4" stroke="#000" stroke-dasharray="1 1"/></svg>
                    <svg class="lk-view" width="18" height="16" viewBox="0 0 18 16"><path d="M.5 .5h15v14H.5z" fill="#fff" stroke="#000"/><path d="M0 0h16v3H0z" fill="#2a5fc0"/><path d="M3 5h2v2H3zM7 5h2v2H7zM11 5h2v2h-2zM3 9h2v2H3zM7 9h2v2H7zM11 9h2v2h-2zM3 12h2v1H3zM7 12h2v1H7z" fill="#00007f"/></svg>
                    <i class="caret view-caret"></i>
                </div>
            </div>
            <div class="dlg-main">
                <div class="places">
                    <div class="place"><svg width="32" height="32"><use href="#recent"/></svg><span>我最近的文档</span></div>
                    <div class="place on"><svg width="32" height="32"><use href="#desk"/></svg><span>桌面</span></div>
                    <div class="place"><svg width="32" height="32"><use href="#docs"/></svg><span>我的文档</span></div>
                    <div class="place"><svg width="32" height="32"><use href="#comp"/></svg><span>我的电脑</span></div>
                    <div class="place"><svg width="32" height="32"><use href="#net"/></svg><span>网上邻居</span></div>
                </div>
                <div class="filelist">
                    <div class="frow"><svg width="16" height="16" viewBox="0 0 16 16"><path d="M5 1h9v8H5z" fill="#e6eefa" stroke="#7e93c0"/><use href="#folder" y="2" width="16" height="14"/></svg><span>我的文档</span></div>
                    <div class="frow"><svg width="16" height="16"><use href="#comp"/></svg><span>我的电脑</span></div>
                    <div class="frow"><svg width="16" height="16"><use href="#net"/></svg><span>网上邻居</span></div>
                    <div class="frow"><svg width="16" height="16"><use href="#folder"/></svg><span>模板</span></div>
                    <div class="frow"><svg width="16" height="16"><use href="#folder"/></svg><span>图</span></div>
                    <div class="frow"><svg width="16" height="16"><use href="#folder"/></svg><span>新建文件夹<span class="m"> (2)</span></span></div>
                    <div class="frow"><svg width="16" height="16" viewBox="0 0 16 16"><path d="M2 1h12v14H2z" fill="#fff" stroke="#445"/><path d="M3 2h10v2H3z" fill="#88a"/><path d="M4 7h3v4H4z" fill="#1c3c8a"/><path d="M8 8h4v1H8z" fill="#c33"/><path d="M8 10h4v1H8z" fill="#1c3c8a"/></svg><span>联想中文木板镂空发光字<span class="m">7-18.ai</span></span></div>
                </div>
                <div class="preview-col">
                    <svg class="preview" width="105" height="106" viewBox="0 0 105 106">
                        <path d="M1 1h103v104H1z" fill="#fff" stroke="#aca899" stroke-width="2"/>
                        <path d="M3 3l99 100M102 3L3 103" stroke="#000"/>
                    </svg>
                    <div class="check"><i class="checkbox">✓</i>预览</div>
                </div>
            </div>
            <div class="fieldrow first">
                <label>文件名<u class="m">(N)</u><span class="m">:</span></label>
                <div class="combo combo-file"><span class="combo-text"></span><span class="combo-btn"><i class="caret"></i></span></div>
                <button class="dbtn default">打开<u class="m">(O)</u></button>
            </div>
            <div class="fieldrow">
                <label>文件类型<u class="m">(T)</u><span class="m">:</span></label>
                <div class="combo combo-file"><span class="combo-text m">AI Files (*.ai)</span><span class="combo-btn"><i class="caret"></i></span></div>
                <button class="dbtn">取消</button>
            </div>
            <div class="filter-info">
                <div>过滤器名字<span class="m">: &nbsp;AI </span>文件过滤器</div>
                <div>过滤器版本<span class="m">: &nbsp;2</span></div>
            </div>
        </div>
    </div>

</div>

</body>
</html>
```

FILE: styles.css
```css
* { box-sizing: border-box; }

body {
    margin: 0;
    background: #ece9d8;
    font-family: "Noto Sans CJK SC", "Liberation Sans", sans-serif;
    font-size: 12px;
    color: #000;
    overflow: hidden;
}

.defs { position: absolute; }

.m {
    font-family: "Liberation Mono", "Noto Sans CJK SC", monospace;
    font-size: 10px;
}

.m14 {
    font-family: "Liberation Mono", monospace;
    font-size: 11.660px;
    white-space: pre;
}

.desktop {
    position: relative;
    width: 1024px;
    height: 768px;
    display: flex;
    flex-direction: column;
    overflow: hidden;
    background: #ece9d8;
}

/* Main window title */
.titlebar {
    height: 26px;
    display: flex;
    align-items: center;
    padding: 0 3px 0 2px;
    background: linear-gradient(#a3b7ec 0, #7f9ce2 12%, #7d99e0 80%, #8aa6e6 100%);
    color: #d9e4f7;
    font-size: 16px;
    font-weight: bold;
    flex: none;
}

.app-logo {
    width: 16px;
    height: 16px;
    background: #000080;
    color: #ff0000;
    font: italic bold 10px/16px "Liberation Sans", sans-serif;
    text-align: center;
    flex: none;
}

.title-text {
    margin-left: 4px;
    line-height: 26px;
    white-space: pre;
}

.title-lat {
    font-family: "Liberation Mono", monospace;
    font-size: 13.300px;
}

.win-btns {
    margin-left: auto;
    display: flex;
    gap: 3px;
}

.win-btn {
    width: 20px;
    height: 20px;
    border: 1px solid #dbe4f8;
    border-radius: 3px;
    background: #6488e0;
    color: #e8eef8;
    display: flex;
    align-items: center;
    justify-content: center;
    font-size: 14px;
    font-weight: bold;
}

.win-close { background: #a97590; }

.glyph-min {
    width: 7px;
    height: 3px;
    background: #fff;
    margin: 8px 5px 0 0;
}

/* Menu */
.menubar {
    height: 21px;
    flex: none;
    display: flex;
    gap: 12px;
    padding-left: 5px;
    align-items: center;
    color: #aca899;
    text-shadow: 1px 1px 0 #fff;
    border-bottom: 1px solid #aca899;
    box-shadow: 0 1px 0 #fff;
    white-space: nowrap;
}

.menubar u { text-decoration: none; }

/* Toolbars */
.tbrow {
    display: flex;
    justify-content: space-between;
    height: 30px;
    flex: none;
}

.tbrow.r1 { height: 31px; }
.tbrow.r4 { height: 32px; }

.toolbar {
    display: flex;
    align-items: center;
    height: 100%;
    border-right: 1px solid #aca899;
    border-bottom: 1px solid #aca899;
    box-shadow: 1px 1px 0 #fff;
}

.tb1 { width: 840px; }
.tb2 { width: 647px; }
.tb3 { width: 444px; }
.tb3b { width: 179px; margin-right: 274px; border-top: 1px solid #aca899; border-left: 1px solid #aca899; }
.tb4 { width: 100%; border-right: none; padding-top: 2px; }

.grip {
    width: 4px;
    height: 24px;
    margin: 0 3px 0 1px;
    border-left: 1px solid #fff;
    border-right: 1px solid #aca899;
    background: #ece9d8;
    flex: none;
}

.g2 { margin-right: 1px; }
.g3 { margin-right: 2px; }

.sep {
    width: 2px;
    height: 22px;
    margin: 0 2px;
    border-left: 1px solid #aca899;
    border-right: 1px solid #fff;
    flex: none;
}

.tbtn {
    width: 29px;
    height: 28px;
    display: flex;
    align-items: center;
    justify-content: center;
    flex: none;
}

.tbtn.w31 { width: 31px; }
.tbtn.drop { width: 12px; }
.tbtn.w14 { width: 14px; }

.tbtn.on, .cbtn.on {
    border: 1px solid #fff;
    border-top-color: #aca899;
    border-left-color: #aca899;
    background: repeating-conic-gradient(#ffffff 0 25%, #ece9d8 0 50%) 0 0 / 2px 2px;
}

.on-line {
    border: 1px solid #fff;
    border-top-color: #aca899;
    border-left-color: #aca899;
}

.i {
    width: 24px;
    height: 24px;
    fill: none;
    shape-rendering: crispEdges;
    overflow: visible;
}

.off { filter: drop-shadow(1px 1px 0 #fff); }

.caret {
    width: 0;
    height: 0;
    border-left: 4px solid transparent;
    border-right: 4px solid transparent;
    border-top: 4px solid #000;
    display: block;
}

.tbtn.off .caret { border-top-color: #aca899; }

.caret.up {
    border-top: none;
    border-bottom: 4px solid #aca899;
}

.axis, .nc {
    font: bold 7px "Liberation Sans", sans-serif;
    fill: #000;
    stroke: none;
}

.nc { fill: #c00; font-size: 8px; }

.abc-text {
    font: bold 14px "Liberation Serif", serif;
    fill: #00f;
    stroke: none;
    letter-spacing: -.5px;
}

.task-glyph {
    font-size: 12px;
    fill: #e00;
}

/* Work area */
.workarea {
    flex: 1;
    display: flex;
    min-height: 0;
}

.toolcol {
    width: 32px;
    height: 250px;
    flex: none;
    display: flex;
    flex-direction: column;
    align-items: center;
    border-right: 1px solid #aca899;
    border-bottom: 1px solid #aca899;
}

.tc2 { width: 31px; height: 276px; }

.hgrip {
    width: 100%;
    height: 8px;
    border-top: 2px solid #fff;
    border-bottom: 1px solid #aca899;
    margin: 1px 0 0;
    flex: none;
}

.cbtn {
    width: 30px;
    height: 30px;
    display: flex;
    align-items: center;
    justify-content: center;
    flex: none;
}

.zbtn {
    width: 29px;
    height: 28px;
    display: flex;
    align-items: center;
    justify-content: center;
    flex: none;
}

.hline {
    width: 24px;
    height: 2px;
    margin: 3px 0 1px;
    border-top: 1px solid #aca899;
    border-bottom: 1px solid #fff;
    flex: none;
}

.canvas-wrap {
    width: 783px;
    flex: none;
    border-left: 1px solid #aca899;
    display: flex;
    flex-direction: column;
}

.hruler {
    flex: none;
    display: block;
    overflow: visible;
}

.rtxt {
    font: bold 13.300px "Liberation Mono", monospace;
    fill: #000;
    stroke: none;
}

.canvas-mid {
    flex: 1;
    display: flex;
    min-height: 0;
    overflow: hidden;
}

.vruler {
    flex: none;
    display: block;
}

.canvas-col {
    flex: 1;
    display: flex;
    flex-direction: column;
    min-width: 0;
}

.canvas-row {
    flex: 1;
    display: flex;
    min-height: 0;
}

.canvas {
    flex: 1;
    background: #fff;
    border-top: 1px solid #716f64;
    border-left: 1px solid #716f64;
}

.vscroll {
    width: 16px;
    flex: none;
    display: flex;
    flex-direction: column;
    background: linear-gradient(to right, #f3f1ec, #fefefb);
}

.hscroll {
    height: 16px;
    flex: none;
    display: flex;
    margin: 0 17px 2px 1px;
    background: linear-gradient(#f3f1ec, #fefefb);
}

.sb-fill { flex: 1; }

.sb-btn {
    width: 16px;
    height: 16px;
    flex: none;
    display: flex;
    align-items: center;
    justify-content: center;
    border: 1px solid #fff;
    border-radius: 2px;
    background: #c3d2f6;
}

.sb-arrow {
    fill: none;
    stroke: #4d6185;
    stroke-width: 2;
}

.hscroll .sb-fill:nth-child(2) { flex: 0 0 352px; }

/* Side panel */
.panel {
    width: 155px;
    flex: none;
    display: flex;
    flex-direction: column;
    border-left: 4px double #aca899;
    margin-left: 3px;
}

.panel-head {
    height: 20px;
    padding-top: 5px;
    display: flex;
    align-items: center;
    flex: none;
    gap: 2px;
}

.panel-grip {
    flex: 1;
    height: 6px;
    margin-right: 3px;
    border-top: 2px solid #fff;
    border-bottom: 1px solid #aca899;
}

.mini-btn {
    width: 12px;
    height: 11px;
    background: #ece9d8;
    border: 1px solid #fff;
    border-right-color: #716f64;
    border-bottom-color: #716f64;
    display: flex;
    align-items: center;
    justify-content: center;
    font-size: 8px;
    line-height: 1;
    font-weight: bold;
}

.mini-max {
    width: 8px;
    height: 7px;
    border: 1px solid #000;
    border-top-width: 2px;
}

.mini-x { margin-right: 9px; }

.panel-body {
    border-top: 1px solid #fff;
    height: 153px;
    border-bottom: 1px solid #aca899;
    box-shadow: 0 1px 0 #fff;
    margin-right: 2px;
    border-right: 1px solid #fff;
}

.tabs {
    height: 27px;
    border-bottom: 1px solid #fff;
    display: flex;
}

.tab {
    width: 34px;
    height: 21px;
    margin-top: 5px;
    padding: 1px 0 0 6px;
    border-right: 1px solid #716f64;
    border-top: 1px solid #fff;
    display: block;
}

.nudge-row {
    height: 20px;
    margin-top: 8px;
    margin-left: 22px;
    display: flex;
    align-items: center;
}

.nudge-row + .nudge-row { margin-top: 0; }

.nudge-row label {
    width: 57px;
    white-space: nowrap;
}

.nudge-input {
    width: 41px;
    height: 19px;
    border: 1px solid #aca899;
    box-shadow: 1px 1px 0 #fff;
    color: #aca899;
    font: 10.500px/17px "Liberation Mono", monospace;
    padding-left: 1px;
    white-space: nowrap;
    overflow: hidden;
}

.panel-btns {
    display: grid;
    grid-template-columns: 65px 65px;
    grid-auto-rows: 21px;
    gap: 3px 2px;
    margin: 2px 0 0 10px;
}

.pbtn, .dbtn {
    font-family: inherit;
    font-size: 12px;
    padding: 0;
    color: #000;
    background: #ece9d8;
    border: 1px solid #fff;
    border-right: 2px solid #716f64;
    border-bottom: 2px solid #716f64;
    line-height: 1;
}

.pbtn.default, .dbtn.default {
    border: 2px solid #000;
    box-shadow: inset 1px 1px 0 #fff, inset -1px -1px 0 #716f64;
}

/* Colour column */
.palette {
    flex: 1;
    padding: 5px 0 0 1px;
    border-left: 1px solid #aca899;
    display: flex;
    flex-direction: column;
    gap: 2px;
    overflow: hidden;
}

.swatch, .pal-tool {
    width: 17px;
    height: 18px;
    border: 1px solid #000;
    flex: none;
    display: flex;
    align-items: center;
    justify-content: center;
}

.pal-top {
    border: none;
    background: #b0ad9e;
    height: 16px;
    margin-bottom: -2px;
}

.sw-white { background: #fff; }
.sw-tool { background: #b0ad9e; border: none; }
.sw-grid { background: #ddd; }

.pal-up, .pal-dn {
    border: 1px solid #aca899;
    box-shadow: inset 1px 1px 0 #fff;
}

/* Status bar */
.statusbar {
    height: 22px;
    flex: none;
    display: flex;
    gap: 2px;
    padding: 2px 0 1px;
    border-top: 1px solid #aca899;
    box-shadow: inset 0 1px 0 #fff;
    font-size: 14px;
}

.pane {
    border: 1px solid #fff;
    border-top-color: #aca899;
    border-left-color: #aca899;
    line-height: 16px;
    padding-left: 1px;
    white-space: nowrap;
}

.pane-main { width: 620px; }

.pane-coord {
    width: 185px;
    font-family: "Liberation Mono", monospace;
    font-size: 11.660px;
}

.u-btn {
    width: 24px;
    margin-left: 2px;
    font: bold 14px/16px "Liberation Sans", sans-serif;
    color: #aca899;
    text-align: center;
    border: 1px solid #fff;
    border-right: 2px solid #716f64;
    border-bottom: 2px solid #716f64;
}

.pane-last { flex: 1; margin-left: 1px; }

/* Taskbar */
.taskbar {
    height: 30px;
    flex: none;
    display: flex;
    align-items: center;
    background: linear-gradient(#1f63e0 0, #3f8af0 6%, #2f6fe2 14%, #245edb 60%, #2358d0 100%);
    color: #fff;
}

.start {
    width: 97px;
    height: 30px;
    display: flex;
    align-items: center;
    gap: 7px;
    padding-left: 10px;
    background: linear-gradient(#4ea84e 0, #3c923c 20%, #3f9b3f 80%, #2c7a2c 100%);
    border-radius: 0 10px 14px 0;
    font: italic 20px "Noto Sans CJK SC", sans-serif;
    text-shadow: 1px 1px 1px #1c4c1c;
    flex: none;
}

.quick {
    width: 102px;
    display: flex;
    align-items: center;
    padding-left: 11px;
    gap: 4px;
    flex: none;
}

.quick svg:nth-child(3) { margin-left: 4px; }

.chev {
    color: #a8c8f0;
    font-size: 13px;
    margin: -8px 0 0 4px;
}

.tasks {
    width: 686px;
    flex: none;
    display: flex;
    gap: 2px;
}

.task {
    flex: 1;
    height: 24px;
    display: flex;
    align-items: center;
    gap: 4px;
    padding-left: 8px;
    background: #3c80f0;
    border-radius: 3px;
    box-shadow: inset 1px 1px 0 #5a97f5, inset -1px -1px 0 #2a62d0;
    white-space: nowrap;
}

.task.active {
    background: #1e52b7;
    box-shadow: inset 1px 1px 1px #143b8c;
}

.lang {
    width: 17px;
    height: 18px;
    margin-left: 9px;
    background: #2f66c8;
    font: bold 10px/18px "Liberation Mono", monospace;
    text-align: center;
    flex: none;
}

.tray {
    width: 102px;
    height: 30px;
    margin-left: auto;
    display: flex;
    align-items: center;
    gap: 1px;
    padding-left: 9px;
    background: linear-gradient(#0c8ae0 0, #16a0ee 10%, #1296e8 80%, #0c80d8 100%);
    flex: none;
}

.tray-arrow { margin-left: -9px; margin-right: 1px; display: flex; }

.clock {
    margin-left: 5px;
    font: 10px "Liberation Mono", monospace;
}

/* File dialog, floats above the window */
.dialog {
    position: absolute;
    left: 167px;
    top: 134px;
    width: 690px;
    height: 470px;
    background: #ece9d8;
    border: 3px solid #0a3be0;
    border-top: none;
    border-radius: 7px 7px 0 0;
    display: flex;
    flex-direction: column;
}

.dlg-title {
    height: 28px;
    margin: 0 -3px;
    display: flex;
    align-items: center;
    padding: 0 4px 0 6px;
    gap: 3px;
    border-radius: 7px 7px 0 0;
    background: linear-gradient(#0a6bf0 0, #0260e8 8%, #0054e3 25%, #0054e3 75%, #0a62ec 92%, #0048d0 100%);
    color: #fff;
    flex: none;
}

.dlg-caption {
    margin-right: auto;
    font-size: 12px;
    font-weight: bold;
    text-shadow: 1px 1px 0 #0a3080;
}

.dlg-help, .dlg-close {
    width: 21px;
    height: 21px;
    border: 1px solid #fff;
    border-radius: 3px;
    display: flex;
    align-items: center;
    justify-content: center;
    font: bold 16px "Liberation Sans", sans-serif;
    background: radial-gradient(circle at 30% 30%, #5d8ef5, #2a5ad8);
}

.dlg-close {
    background: radial-gradient(circle at 30% 30%, #ea7a56, #cf3c18);
    font-size: 14px;
}

.dlg-body {
    flex: 1;
    min-height: 0;
    display: flex;
    flex-direction: column;
}

.lookin {
    margin-top: 9px;
    height: 20px;
    display: flex;
    align-items: center;
    flex: none;
}

.lookin-label {
    margin: 0 0 5px 19px;
    width: 79px;
    white-space: nowrap;
}

.lookin-label u, .fieldrow u { text-decoration: underline; }

.combo {
    display: flex;
    align-items: center;
    height: 20px;
    background: #fff;
    border: 1px solid #fff;
    border-top-color: #aca899;
    border-left-color: #aca899;
    box-shadow: inset 1px 1px 0 #716f64;
    flex: none;
}

.combo-look {
    width: 259px;
    padding-left: 5px;
}

.combo-text {
    margin: -2px 0 0 4px;
    flex: 1;
    white-space: nowrap;
}

.combo-btn {
    width: 16px;
    height: 17px;
    margin: 0 1px 0 0;
    display: flex;
    align-items: center;
    justify-content: center;
    background: #ece9d8;
    border: 1px solid #fff;
    border-right: 2px solid #716f64;
    border-bottom: 2px solid #716f64;
    flex: none;
}

.lookin-tools {
    display: flex;
    align-items: center;
    margin-left: 15px;
}

.lk-up { margin-left: 6px; }
.lk-new { margin-left: 6px; }
.lk-view { margin-left: 5px; }
.view-caret { margin-left: -2px; }
.lk-back { filter: drop-shadow(1px 1px 0 #fff); }

.dlg-main {
    display: flex;
    margin-top: 7px;
    height: 282px;
    flex: none;
}

.places {
    width: 87px;
    margin: 0 6px 0 5px;
    flex: none;
    padding-top: 3px;
}

.place {
    height: 50px;
    display: flex;
    flex-direction: column;
    align-items: center;
    line-height: 13px;
    white-space: nowrap;
    padding-top: 5px;
}

.place:first-child { height: 48px; padding-top: 1px; }

.place.on {
    padding-top: 1px;
    border: 1px solid #fff;
    border-color: #aca899 #fff #fff #aca899;
    background: repeating-conic-gradient(#ffffff 0 25%, #ece9d8 0 50%) 0 0 / 2px 2px;
}

.place.on span { margin-top: 2px; }

.filelist {
    width: 450px;
    flex: none;
    background: #fff;
    border: 1px solid #7f9db9;
    padding: 0 0 0 1px;
}

.frow {
    height: 17px;
    display: flex;
    align-items: center;
    gap: 2px;
    white-space: pre;
}

.preview-col {
    margin: -6px 0 0 18px;
    width: 110px;
    flex: none;
}

.preview {
    display: block;
    box-shadow: 1px 1px 0 #fff;
}

.check {
    margin: 16px 0 0 -3px;
    display: flex;
    align-items: center;
    gap: 6px;
    color: #aca899;
    text-shadow: 1px 1px 0 #fff;
}

.checkbox {
    width: 12px;
    height: 12px;
    border: 1px solid #aca899;
    font: bold 10px/10px "DejaVu Sans", sans-serif;
    text-align: center;
    color: #aca899;
}

.fieldrow {
    display: flex;
    align-items: center;
    height: 23px;
    margin-left: 100px;
    margin-top: 4px;
    flex: none;
}

.fieldrow.first { margin-top: 9px; }

.fieldrow label {
    width: 94px;
    white-space: nowrap;
    margin-bottom: 1px;
}

.combo-file { width: 244px; }

.dbtn {
    width: 74px;
    height: 23px;
    margin-left: 36px;
}

.filter-info {
    margin: 12px 0 0 10px;
    line-height: 18px;
    white-space: nowrap;
}
```
